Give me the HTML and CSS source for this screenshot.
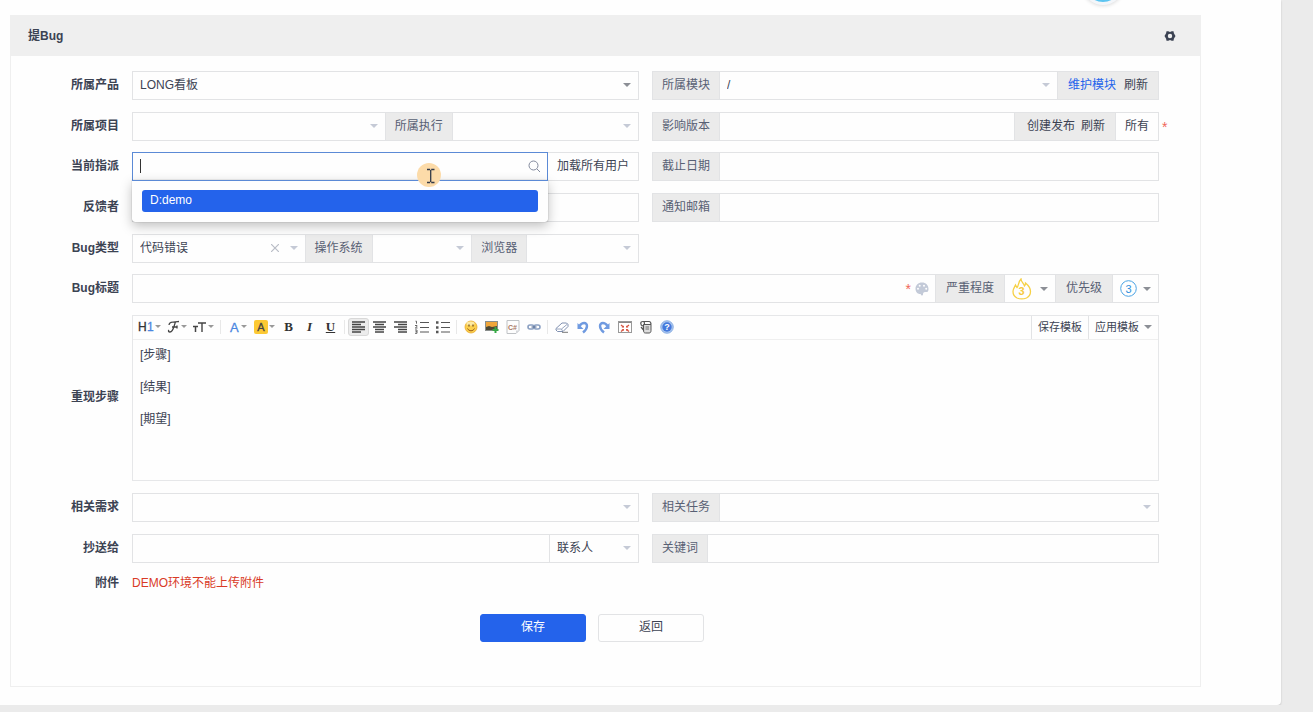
FILE: index.html
```html
<!DOCTYPE html>
<html lang="zh-CN">
<head>
<meta charset="utf-8">
<title>提Bug</title>
<link rel="stylesheet" href="styles.css">
</head>
<body>
<main class="page">
  <span class="avatar"></span>
  <section class="panel">
    <header class="panel-head">
      <h1 class="panel-title">提Bug</h1>
      <button class="icon-btn" type="button" aria-label="设置">
        <svg width="12" height="12" viewBox="0 0 12 12"><path fill="#3c4353" fill-rule="evenodd" d="M2.500 1.200h1.800L6 2l1.700-.8h1.800l.4 2L11.500 6l-1.600 2.800-.4 2H7.700L6 10l-1.700.8H2.500l-.4-2L.5 6l1.600-2.800zM6 3.800a2.200 2.200 0 1 0 0 4.400 2.200 2.200 0 0 0 0-4.400z"/></svg>
      </button>
    </header>
    <form class="form">
      <div class="group">
        <div class="row">
          <label class="row-label" for="product">所属产品</label>
          <div class="cell">
            <div class="select dark"><select id="product"><option>LONG看板</option></select></div>
          </div>
          <div class="cell">
            <label class="addon" for="module">所属模块</label>
            <div class="select"><select id="module"><option>/</option></select></div>
            <span class="addon links"><a class="primary" href="#">维护模块</a><a href="#">刷新</a></span>
          </div>
        </div>
        <div class="row">
          <label class="row-label" for="project">所属项目</label>
          <div class="cell">
            <div class="select grow-253"><select id="project"><option></option></select></div>
            <label class="addon" for="execution">所属执行</label>
            <div class="select grow-186"><select id="execution"><option></option></select></div>
          </div>
          <div class="cell">
            <label class="addon" for="build">影响版本</label>
            <input class="field" id="build" type="text">
            <span class="addon links release"><a href="#">创建发布</a><a href="#">刷新</a></span>
            <button class="side-btn" type="button">所有</button>
            <span class="required outside">*</span>
          </div>
        </div>
      </div>
      <div class="group">
        <div class="row">
          <label class="row-label" for="assigned">当前指派</label>
          <div class="cell">
            <div class="picker">
              <input class="field active" id="assigned" type="text">
              <span class="caret"></span>
              <svg class="search" width="13" height="13" viewBox="0 0 13 13" fill="none" stroke="#838a9d"><circle cx="5.500" cy="5.500" r="4.500"/><path d="M9 9l3 3"/></svg>
              <ul class="menu"><li><a class="menu-item" href="#">D:demo</a></li></ul>
              <svg class="pointer" width="24" height="24" viewBox="0 0 24 24"><circle cx="12" cy="12" r="12" fill="#fcdba9"/><path d="M10 6.500h3.200M14.200 6.500h3.300M10 19.500h3.200M14.200 19.500h3.300M13.700 7v12" fill="none" stroke="#333a48" stroke-width="1.300"/></svg>
            </div>
            <button class="side-btn" type="button">加载所有用户</button>
          </div>
          <div class="cell">
            <label class="addon" for="deadline">截止日期</label>
            <input class="field" id="deadline" type="text">
          </div>
        </div>
        <div class="row">
          <label class="row-label" for="feedback">反馈者</label>
          <div class="cell"><input class="field" id="feedback" type="text"></div>
          <div class="cell">
            <label class="addon" for="mail">通知邮箱</label>
            <input class="field" id="mail" type="text">
          </div>
        </div>
        <div class="row">
          <label class="row-label" for="type">Bug类型</label>
          <div class="cell">
            <div class="select grow-172">
              <select id="type"><option>代码错误</option></select>
              <button class="clear" type="button" aria-label="清除"><svg width="8" height="8" viewBox="0 0 8 8" stroke="#b9bdc6" stroke-width="1.200"><path d="M0 0l8 8M8 0L0 8"/></svg></button>
            </div>
            <label class="addon" for="os">操作系统</label>
            <div class="select grow-99"><select id="os"><option></option></select></div>
            <label class="addon" for="browser">浏览器</label>
            <div class="select grow-111"><select id="browser"><option></option></select></div>
          </div>
        </div>
      </div>
      <div class="group">
        <div class="row">
          <label class="row-label" for="title">Bug标题</label>
          <div class="cell wide">
            <div class="title-box">
              <input class="field" id="title" type="text">
              <div class="title-tools">
                <span class="required">*</span>
                <svg width="14" height="14" viewBox="0 0 14 14"><path fill="#c3cad8" fill-rule="evenodd" d="M7 .5C3.200.5.500 3.200.500 6.500S2.500 12 5 12c.8 0 .9.300 1 1 .2.700 2 .6 2-.5 0-1.500.5-2.500 2-2.500h2c1 0 1.500-1.500 1.500-3C13.500 3 10.800.5 7 .5zM3 5.700a1 1 0 1 1 0 2 1 1 0 0 1 0-2zm1.700-3a1 1 0 1 1 0 2 1 1 0 0 1 0-2zm4.300 0a1 1 0 1 1 0 2 1 1 0 0 1 0-2zm2.200 3a1 1 0 1 1 0 2 1 1 0 0 1 0-2z"/></svg>
              </div>
            </div>
            <span class="addon roomy">严重程度</span>
            <button class="level severity" type="button" aria-label="严重程度 3">
              <svg width="20" height="22" viewBox="0 0 20 22"><path d="M5 20C2 18.500 1 16 1 13.500 1 11 2.500 9 3.500 7c.5 1 .8 1.800 1.500 2.500C7 7.500 6 4 9 1c.3 3 2.500 4 3.500 7 1-.7 1-1.500 1-3 2.500 2 5 5 5 8.500 0 3-1.500 5.200-4 6.500-2.500 1-7 1-9.500 0z" fill="none" stroke="#f6d044" stroke-width="1.300"/><text x="9.500" y="17" text-anchor="middle" font-size="11" font-weight="bold" fill="#f6c93c">3</text></svg>
              <i class="tri"></i>
            </button>
            <span class="addon roomy">优先级</span>
            <button class="level priority" type="button" aria-label="优先级 3">
              <svg width="17" height="17" viewBox="0 0 17 17"><circle cx="8.500" cy="8.500" r="7.800" fill="none" stroke="#4aa3e4"/><text x="8.500" y="12.500" text-anchor="middle" font-size="11" fill="#2f8fdd">3</text></svg>
              <i class="tri"></i>
            </button>
          </div>
        </div>
        <div class="row">
          <label class="row-label" for="steps">重现步骤</label>
          <div class="editor wide">
            <div class="toolbar">
              <div class="tools">
                <button class="tool drop" type="button" aria-label="标题"><svg width="16" height="14" viewBox="0 0 16 14"><text x="0" y="11" font-size="12" fill="#333" stroke="#333" stroke-width=".3">H</text><text x="9" y="11" font-size="12" fill="#4a86e0" stroke="#4a86e0" stroke-width=".3">1</text></svg></button>
                <button class="tool drop" type="button" aria-label="字体"><svg width="13" height="14" viewBox="0 0 13 14" fill="none" stroke="#444" stroke-width="1.300"><path d="M2 5C2 2 5 2 12 1.500M8.500 2C7 5 6.500 12 3 12c-1.500 0-2-1-1-2M5 7h5M10 5.500v3"/></svg></button>
                <button class="tool drop" type="button" aria-label="字号"><svg width="14" height="14" viewBox="0 0 14 14" fill="none" stroke="#444"><path d="M0 6.500h5M2.500 6v6" stroke-width="1.500"/><path d="M5 3h8M9 3v9" stroke-width="1.400"/></svg></button>
                <i class="sep"></i>
                <button class="tool drop" type="button" aria-label="文字颜色"><svg width="11" height="14" viewBox="0 0 11 14"><text x="1" y="12" font-size="13" fill="#4a86e0" stroke="#4a86e0" stroke-width=".3">A</text></svg></button>
                <button class="tool drop" type="button" aria-label="背景颜色"><svg width="14" height="14" viewBox="0 0 14 14"><rect width="14" height="14" rx="2" fill="#fcc934"/><text x="7" y="11" font-size="11" text-anchor="middle" fill="#444" stroke="#444" stroke-width=".3">A</text></svg></button>
                <button class="tool serif" type="button" aria-label="粗体"><b>B</b></button>
                <button class="tool serif" type="button" aria-label="斜体"><b><em>I</em></b></button>
                <button class="tool serif" type="button" aria-label="下划线"><b><u>U</u></b></button>
                <i class="sep"></i>
                <button class="tool on" type="button" aria-label="左对齐"><svg width="13" height="12" viewBox="0 0 13 12" stroke="#444" stroke-width="1.400"><path d="M0 1h13M0 3.500h9M0 6h13M0 8.500h13M0 11h9"/></svg></button>
                <button class="tool" type="button" aria-label="居中"><svg width="13" height="12" viewBox="0 0 13 12" stroke="#444" stroke-width="1.300"><path d="M0 1h13M2 3.500h9M0 6h13M2 8.500h9M2 11h9"/></svg></button>
                <button class="tool" type="button" aria-label="右对齐"><svg width="13" height="12" viewBox="0 0 13 12" stroke="#444" stroke-width="1.300"><path d="M0 1h13M4 3.500h9M0 6h13M4 8.500h9M4 11h9"/></svg></button>
                <button class="tool" type="button" aria-label="编号列表"><svg width="14" height="14" viewBox="0 0 14 14" fill="none" stroke="#555"><path d="M5 2.500h9M5 7.500h9M5 12h9" stroke-width="1.200"/><path d="M.5 1.200h1v2.500M0 5.500h2v1L.3 8H2.500M0 10h2v3.300H0M.5 11.700H2" stroke-width=".9"/></svg></button>
                <button class="tool" type="button" aria-label="项目列表"><svg width="14" height="14" viewBox="0 0 14 14" stroke="#555"><path d="M5 2.500h9M5 7.500h9M5 12h9" stroke-width="1.200"/><path d="M0 2.500h2.500M0 7.500h2.500M0 12h2.500" stroke-width="2.400"/></svg></button>
                <i class="sep"></i>
                <button class="tool" type="button" aria-label="表情"><svg width="14" height="14" viewBox="0 0 14 14"><circle cx="7" cy="7" r="6" fill="#fbcf4c" stroke="#e8a82d" stroke-width=".8"/><ellipse cx="6.500" cy="3.500" rx="4" ry="2" fill="#fdeaa5"/><path d="M5 4.500v2M9 4.500v2" stroke="#6b481c" stroke-width="1.200"/><path d="M3.500 8.500c1.500 3 5.500 3 7 0" fill="none" stroke="#9a5c18"/></svg></button>
                <button class="tool" type="button" aria-label="图片"><svg width="14" height="14" viewBox="0 0 14 14"><rect x=".5" y="1.500" width="12" height="9" fill="#f0a63a" stroke="#8a8f8d"/><path d="M1 7l3-1 3 1 5-1v4H1z" fill="#4d4834"/><path d="M10.500 7v6M7.500 10h6" stroke="#36a845" stroke-width="2"/></svg></button>
                <button class="tool" type="button" aria-label="代码"><svg width="14" height="14" viewBox="0 0 14 14"><path d="M1 .5h12v10l-3 3H1z" fill="#fdfdfd" stroke="#bfc2c5"/><path d="M13 10.500l-3 3v-3z" fill="#d5d7da"/><text x="2" y="9.500" font-size="7" font-weight="bold" fill="#a87862">C#</text></svg></button>
                <button class="tool" type="button" aria-label="链接"><svg width="14" height="14" viewBox="0 0 14 14" fill="none" stroke="#8ba0c2" stroke-width="1.600"><rect x="1" y="5" width="6" height="4" rx="2"/><rect x="7" y="5" width="6" height="4" rx="2"/><path d="M4.500 7h5" stroke="#5a7096" stroke-width="1.200"/></svg></button>
                <i class="sep"></i>
                <button class="tool" type="button" aria-label="清除格式"><svg width="14" height="14" viewBox="0 0 14 14"><path d="M1 8.500L7 3h4.500l1.500 1.500v2L8 11.500H2.500L1 10z" fill="#fff" stroke="#8090b0"/><path d="M1.500 9h5L12.500 4M6.500 9l1 2" fill="none" stroke="#8090b0" stroke-width=".8"/><path d="M7 12.300h6" stroke="#777"/></svg></button>
                <button class="tool" type="button" aria-label="撤销"><svg width="14" height="14" viewBox="0 0 14 14"><path d="M3.500 6C6 2 11 2 11 6c0 3-1.500 4.500-4 6.500" fill="none" stroke="#6f9ae0" stroke-width="2.400"/><path d="M1.500 3v6h6z" fill="#6f9ae0"/></svg></button>
                <button class="tool" type="button" aria-label="重做"><svg width="14" height="14" viewBox="0 0 14 14"><path d="M10.500 6C8 2 3 2 3 6c0 3 1.500 4.500 4 6.500" fill="none" stroke="#6f9ae0" stroke-width="2.400"/><path d="M12.500 3v6h-6z" fill="#6f9ae0"/></svg></button>
                <button class="tool" type="button" aria-label="全屏"><svg width="14" height="14" viewBox="0 0 14 14"><rect x=".5" y="1.500" width="13" height="11" fill="#fff" stroke="#999"/><path d="M1 2.500h12" stroke="#888"/><path d="M3 5l2.500 2M11 5L8.500 7M3 11.500l2.500-2M11 11.500l-2.500-2" stroke="#d85542" stroke-width="1.300"/><path d="M6 5.500v2H3.500zM8 5.500v2h2.500zM6 11V9H3.500zM8 11V9h2.500z" fill="#d85542"/></svg></button>
                <button class="tool" type="button" aria-label="源代码"><svg width="14" height="14" viewBox="0 0 14 14" fill="none" stroke="#555"><path d="M4.500 4.500H12v6c0 1.500-.5 2.500-2 2.500H6.500c-1.500 0-2-1-2-2.500z" fill="#ddd"/><path d="M6.500 7H10M6.500 9H10" stroke-width=".8"/><path d="M4 6C1 5 1 1.500 4 1.500h6c2 0 2 1.500 2 3M4 1.500c2 0 1.500 2.500 1 3.500M4.500 6v4L2 7" stroke-width="1.200"/></svg></button>
                <button class="tool" type="button" aria-label="帮助"><svg width="14" height="14" viewBox="0 0 14 14"><circle cx="7" cy="7" r="6.300" fill="#aac6ee" stroke="#7ea6e0" stroke-width=".8"/><circle cx="7" cy="7" r="4.700" fill="#4378dc"/><text x="7" y="10.300" text-anchor="middle" font-size="9" font-weight="bold" fill="#fff">?</text></svg></button>
              </div>
              <div class="templates">
                <button class="template" type="button">保存模板</button>
                <button class="template" type="button">应用模板 <i class="tri"></i></button>
              </div>
            </div>
            <textarea class="steps" id="steps">[步骤]

[结果]

[期望]</textarea>
          </div>
        </div>
        <div class="row">
          <label class="row-label" for="story">相关需求</label>
          <div class="cell"><div class="select"><select id="story"><option></option></select></div></div>
          <div class="cell">
            <label class="addon" for="task">相关任务</label>
            <div class="select"><select id="task"><option></option></select></div>
          </div>
        </div>
        <div class="row">
          <label class="row-label" for="cc">抄送给</label>
          <div class="cell">
            <input class="field" id="cc" type="text">
            <div class="select contact"><select aria-label="联系人"><option>联系人</option></select></div>
          </div>
          <div class="cell">
            <label class="addon" for="keywords">关键词</label>
            <input class="field" id="keywords" type="text">
          </div>
        </div>
      </div>
      <div class="row note-row">
        <span class="row-label">附件</span>
        <p class="note wide">DEMO环境不能上传附件</p>
      </div>
      <div class="actions">
        <button class="btn btn-primary" type="submit">保存</button>
        <button class="btn" type="button">返回</button>
      </div>
    </form>
  </section>
</main>
</body>
</html>
```
FILE: styles.css
```css
* { box-sizing: border-box; }

body {
  margin: 0;
  background: #ebebeb;
  color: #3c4353;
  font: 12px/18px "Liberation Sans", "Noto Sans CJK SC", sans-serif;
}

button, input, select, textarea {
  margin: 0;
  font: inherit;
  color: inherit;
}

a { color: inherit; text-decoration: none; }

button { cursor: pointer; }

svg { display: block; flex: none; }

svg text { font-family: "Liberation Sans", sans-serif; }

.page {
  position: relative;
  margin-right: 32px;
  padding: 15px 80px 18px 10px;
  background: #fefefe;
  border-radius: 0 0 4px 0;
  box-shadow: 0 1px 2px rgba(0, 0, 0, .18);
}

.avatar {
  position: absolute;
  top: -37px;
  right: 157px;
  width: 42px;
  height: 42px;
  border: 3px solid #f3f6fa;
  border-radius: 50%;
  background: #5cc4f0;
  box-shadow: 0 0 4px rgba(0, 0, 0, .2);
}

.panel { border: 1px solid #efefef; }

.panel-head {
  display: flex;
  align-items: center;
  justify-content: space-between;
  height: 40px;
  padding: 0 24px 0 17px;
  background: #efefef;
}

.panel-title { margin: 0; font-size: 12px; line-height: 18px; }

.icon-btn { padding: 0; border: 0; background: none; }

.form { padding: 15px 41px 44px 0; }

.group {
  display: grid;
  gap: 12px;
  margin-bottom: 11px;
}

.row {
  display: grid;
  grid-template-columns: 108px 1fr 1fr;
  column-gap: 13px;
  align-items: center;
}

.row-label { padding-bottom: 2px; text-align: right; font-weight: bold; }

.wide { grid-column: 2 / -1; }

.cell {
  position: relative;
  display: flex;
  height: 29px;
  min-width: 0;
}

.cell > * + * { margin-left: -1px; }

.field, .select, .side-btn, .level, .addon { border: 1px solid #e2e3e5; }

.field {
  flex: 1;
  min-width: 0;
  width: 100%;
  height: 29px;
  padding: 0 7px;
  background: #fefefe;
  outline: none;
}

.addon {
  display: flex;
  flex: none;
  align-items: center;
  padding: 0 9px 2px;
  background: #ebebeb;
  color: #586074;
}

.roomy { padding-left: 10px; padding-right: 10px; }

.links { gap: 8px; padding-left: 10px; padding-right: 10px; color: #3c4353; }

.links .primary { color: #2463eb; }

.release { padding-left: 12px; gap: 6px; }

.select {
  position: relative;
  flex: 1 1 0;
  min-width: 0;
  background: #fefefe;
}

.grow-253 { flex-grow: 253; }
.grow-186 { flex-grow: 186; }
.grow-172 { flex-grow: 172; }
.grow-99 { flex-grow: 99; }
.grow-111 { flex-grow: 111; }

.select select {
  display: block;
  width: 100%;
  height: 27px;
  padding: 0 20px 2px 7px;
  border: 0;
  background: none;
  appearance: none;
  outline: none;
}

.select::after, .tri {
  content: "";
  border: 4px solid transparent;
  border-top-color: #c5cad6;
  border-bottom: 0;
}

.select::after {
  position: absolute;
  top: 11px;
  right: 7px;
  pointer-events: none;
}

.dark::after, .tri { border-top-color: #8c8f96; }

.contact { flex: 0 0 90px; }

.clear {
  position: absolute;
  top: 9px;
  right: 26px;
  padding: 0;
  border: 0;
  background: none;
}

.side-btn { flex: none; padding: 0 9px 2px; background: #fefefe; }

.required { color: #f0675a; font-size: 14px; line-height: 18px; }

.outside { position: absolute; left: 100%; top: 6px; padding-left: 4px; }

.picker { position: relative; flex: 1; z-index: 2; }

.active { border-color: #5b8ad6; }

.caret {
  position: absolute;
  top: 7px;
  left: 8px;
  height: 14px;
  border-left: 1px solid #333;
}

.search { position: absolute; top: 8px; right: 7px; }

.menu {
  position: absolute;
  top: 28px;
  left: 0;
  right: 0;
  margin: 0;
  padding: 9px 10px 10px;
  list-style: none;
  background: #fefefe;
  border-top: 1px solid #5b8ad6;
  border-radius: 0 0 3px 3px;
  box-shadow: 0 0 1px rgba(0, 0, 0, .5), 0 4px 12px rgba(0, 0, 0, .25);
}

.menu-item {
  display: block;
  padding: 1px 8px 3px;
  border-radius: 3px;
  background: #2463eb;
  color: #fff;
}

.pointer { position: absolute; top: 11px; right: 107px; }

.title-box { position: relative; flex: 1; }

.title-tools {
  position: absolute;
  top: 0;
  right: 7px;
  display: flex;
  align-items: center;
  gap: 4px;
  height: 29px;
}

.level {
  display: flex;
  align-items: center;
  justify-content: space-between;
  padding: 0 7px;
  background: #fefefe;
}

.severity { width: 52px; }
.priority { width: 47px; }

.editor { border: 1px solid #e6e7e9; }

.toolbar {
  display: flex;
  justify-content: space-between;
  height: 24px;
  border-bottom: 1px solid #efefef;
}

.tools {
  display: flex;
  align-items: center;
  padding: 0 0 2px 3px;
}

.tool {
  display: flex;
  align-items: center;
  justify-content: center;
  width: 21px;
  height: 18px;
  padding: 0;
  border: 1px solid transparent;
  border-radius: 3px;
  background: none;
}

.drop { width: 27px; gap: 1px; }

.drop::after {
  content: "";
  border: 3px solid transparent;
  border-top-color: #999;
  border-bottom: 0;
}

.serif { color: #333; font-family: "Liberation Serif", serif; font-size: 13px; }

.on { border-color: #d8d8d8; background: #ececec; }

.sep {
  width: 1px;
  height: 14px;
  margin: 0 3px;
  background: #e8e8e8;
}

.templates { display: flex; }

.template {
  display: flex;
  align-items: center;
  gap: 5px;
  padding: 0 6px 2px;
  border: 0;
  border-left: 1px solid #e2e3e5;
  background: none;
  font-size: 11px;
}

.steps {
  display: block;
  width: 100%;
  height: 140px;
  padding: 7px;
  border: 0;
  background: none;
  line-height: 16px;
  resize: none;
  outline: none;
}

.note { margin: 0; padding-bottom: 2px; color: #d93a26; }

.actions {
  display: flex;
  justify-content: center;
  gap: 12px;
  margin-top: 20px;
  padding-left: 14px;
}

.btn {
  width: 106px;
  height: 28px;
  padding: 0 0 2px;
  border: 1px solid #e2e3e5;
  border-radius: 3px;
  background: #fefefe;
}

.btn-primary { border-color: #2463eb; background: #2463eb; color: #fff; }
```
